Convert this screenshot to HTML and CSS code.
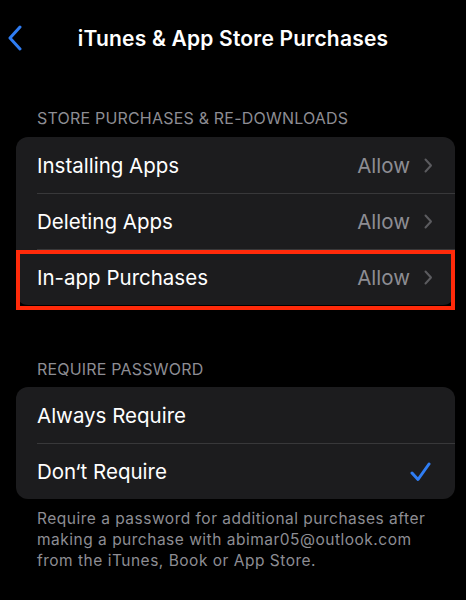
FILE: index.html
```html
<!DOCTYPE html>
<html lang="en">
<head>
<meta charset="utf-8">
<link rel="stylesheet" href="styles.css">
</head>
<body>
<div class="screen">
  <header class="nav">
    <div class="back">
      <svg width="16" height="26" viewBox="0 0 16 26"><path d="M13 2 L3 13 L13 24" fill="none" stroke="#2f7df3" stroke-width="3" stroke-linecap="round" stroke-linejoin="round"/></svg>
    </div>
    <h1 class="title">iTunes &amp; App Store Purchases</h1>
    <div></div>
  </header>

  <div class="section-head first">STORE PURCHASES &amp; RE-DOWNLOADS</div>
  <div class="card">
    <div class="row">
      <span class="label">Installing Apps</span>
      <span class="value">Allow</span>
      <svg class="chev" width="9" height="15" viewBox="0 0 9 15"><path d="M1.5 1.5 L7 7.5 L1.5 13.5" fill="none" stroke="#5b5b5f" stroke-width="2" stroke-linecap="round" stroke-linejoin="round"/></svg>
    </div>
    <div class="row">
      <span class="label">Deleting Apps</span>
      <span class="value">Allow</span>
      <svg class="chev" width="9" height="15" viewBox="0 0 9 15"><path d="M1.5 1.5 L7 7.5 L1.5 13.5" fill="none" stroke="#5b5b5f" stroke-width="2" stroke-linecap="round" stroke-linejoin="round"/></svg>
    </div>
    <div class="row highlighted">
      <span class="label">In-app Purchases</span>
      <span class="value">Allow</span>
      <svg class="chev" width="9" height="15" viewBox="0 0 9 15"><path d="M1.5 1.5 L7 7.5 L1.5 13.5" fill="none" stroke="#5b5b5f" stroke-width="2" stroke-linecap="round" stroke-linejoin="round"/></svg>
      <div class="redbox"></div>
    </div>
  </div>

  <div class="section-head second">REQUIRE PASSWORD</div>
  <div class="card">
    <div class="row">
      <span class="label">Always Require</span>
    </div>
    <div class="row">
      <span class="label">Don‘t Require</span>
      <svg class="check" width="21" height="20" viewBox="0 0 21 20"><path d="M2 11 L8 17.5 L19 2" fill="none" stroke="#2f7df3" stroke-width="3" stroke-linecap="round" stroke-linejoin="round"/></svg>
    </div>
  </div>

  <p class="footer">Require a password for additional purchases after making a purchase with abimar05@outlook.com from the iTunes, Book or App Store.</p>
</div>
</body>
</html>
```

FILE: styles.css
```css
html, body {
  margin: 0;
  padding: 0;
  background: #000;
}
body {
  font-family: Inter, "Noto Sans", "Liberation Sans", sans-serif;
  color: #fff;
  width: 466px;
  height: 600px;
  overflow: hidden;
}
.nav {
  display: grid;
  grid-template-columns: 1fr auto 1fr;
  align-items: center;
  height: 76px;
}
.back {
  padding-left: 7px;
  display: flex;
  align-items: center;
}
.title {
  margin: 0;
  font-size: 21px;
  font-weight: 600;
  letter-spacing: 0.2px;
}
.section-head {
  font-size: 16px;
  line-height: 18px;
  color: #8d8d93;
  padding-left: 37px;
  letter-spacing: 0.2px;
}
.section-head.first {
  margin-top: 33px;
  margin-bottom: 10px;
}
.section-head.second {
  margin-top: 55px;
  margin-bottom: 9px;
}
.card {
  margin-left: 16px;
  margin-right: 11px;
  background: #1c1c1e;
  border-radius: 12px;
}
.row {
  position: relative;
  display: flex;
  align-items: center;
  height: 56px;
  margin-left: 21px;
  padding-right: 22px;
  box-sizing: border-box;
}
.row + .row {
  border-top: 1px solid #38383a;
}
.label {
  flex: 1;
  font-size: 20.5px;
  letter-spacing: 0;
}
.value {
  font-size: 20.5px;
  color: #8d8d93;
  margin-right: 14px;
}
.chev {
  display: block;
}
.check {
  display: block;
  margin-right: 2px;
}
.redbox {
  position: absolute;
  left: -21px;
  right: 0;
  top: 0;
  bottom: -5px;
  border: 4px solid #ff2a0a;
  box-sizing: border-box;
  pointer-events: none;
}
.footer {
  margin: 9px 25px 0 37px;
  font-size: 15.5px;
  line-height: 21px;
  letter-spacing: 0.5px;
  color: #8d8d93;
}
```
